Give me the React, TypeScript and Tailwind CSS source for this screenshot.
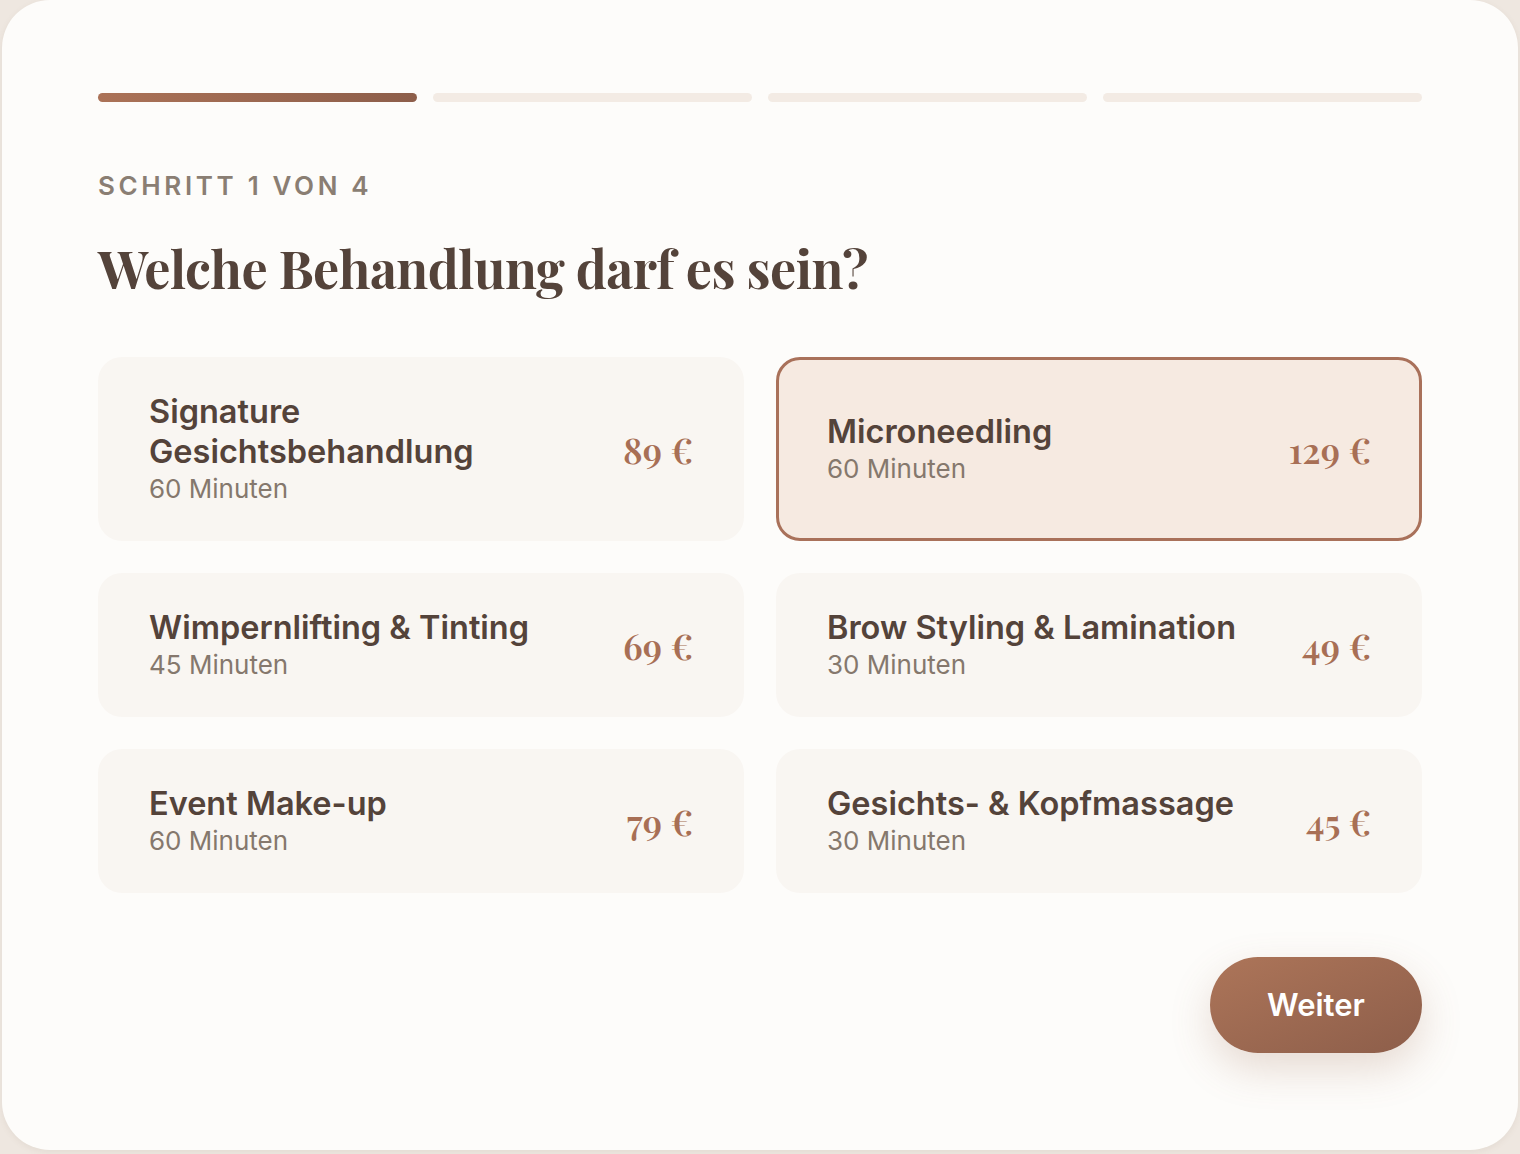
import { useState } from "react"

type Treatment = {
  id: string
  name: string
  duration: string
  price: string
}

const TREATMENTS: Treatment[] = [
  { id: "signature", name: "Signature Gesichtsbehandlung", duration: "60 Minuten", price: "89 €" },
  { id: "micro", name: "Microneedling", duration: "60 Minuten", price: "129 €" },
  { id: "lashes", name: "Wimpernlifting & Tinting", duration: "45 Minuten", price: "69 €" },
  { id: "brows", name: "Brow Styling & Lamination", duration: "30 Minuten", price: "49 €" },
  { id: "event", name: "Event Make-up", duration: "60 Minuten", price: "79 €" },
  { id: "massage", name: "Gesichts- & Kopfmassage", duration: "30 Minuten", price: "45 €" },
]

const SERIF = "font-['Playfair_Display','Liberation_Serif',serif]"

export default function App() {
  const [selected, setSelected] = useState("micro")
  const step = 1

  return (
    <div className="min-h-screen bg-[#eee7e0] px-[2px] pb-[4px] font-['Inter','Noto_Sans',sans-serif] text-[#54433a]">
      <div className="min-h-[1150px] rounded-[48px] bg-[#fdfcfa] px-[96px] pt-[93px] pb-[96px] shadow-[0_2px_6px_rgba(120,90,70,0.08)]">
        {/* Fortschritt */}
        <div className="grid grid-cols-4 gap-4">
          {[1, 2, 3, 4].map((n) => (
            <div
              key={n}
              className={[
                "h-[9px] rounded-full",
                n <= step
                  ? "bg-gradient-to-r from-[#ab7257] to-[#8d5e4a]"
                  : "bg-[#f3ebe4]",
              ].join(" ")}
            />
          ))}
        </div>

        <div className="mt-[67px] text-[26px] font-semibold leading-[34px] tracking-[0.14em] text-[#8a7e73]">
          SCHRITT {step} VON 4
        </div>

        <h1 className={`${SERIF} mt-[34px] text-[52px] font-bold leading-[62px] tracking-[-0.01em] text-[#54433a]`}>
          Welche Behandlung darf es sein?
        </h1>

        {/* Behandlungen */}
        <div className="mt-[58px] grid grid-cols-2 gap-8">
          {TREATMENTS.map((t) => {
            const active = t.id === selected
            return (
              <button
                key={t.id}
                type="button"
                onClick={() => setSelected(t.id)}
                className={[
                  "flex items-center justify-between gap-6 rounded-[24px] border-[3px] px-12 py-8 text-left",
                  active
                    ? "border-[#a9715a] bg-[#f6eae1]"
                    : "border-transparent bg-[#f9f6f2]",
                ].join(" ")}
              >
                <div className="min-w-0 flex-1">
                  <div className="text-[32.5px] font-semibold leading-[40px] text-[#54433a]">
                    {t.name}
                  </div>
                  <div className="text-[26px] leading-[34px] text-[#85786d]">
                    {t.duration}
                  </div>
                </div>
                <div className={`${SERIF} text-[36px] font-semibold text-[#a86f55]`}>
                  {t.price}
                </div>
              </button>
            )
          })}
        </div>

        <div className="mt-16 flex justify-end">
          <button
            type="button"
            className="h-[96px] w-[212px] rounded-full bg-gradient-to-br from-[#ad7559] to-[#8d5e4a] text-[31px] font-semibold text-white shadow-[0_16px_40px_rgba(150,100,75,0.22)]"
          >
            Weiter
          </button>
        </div>
      </div>
    </div>
  )
}
